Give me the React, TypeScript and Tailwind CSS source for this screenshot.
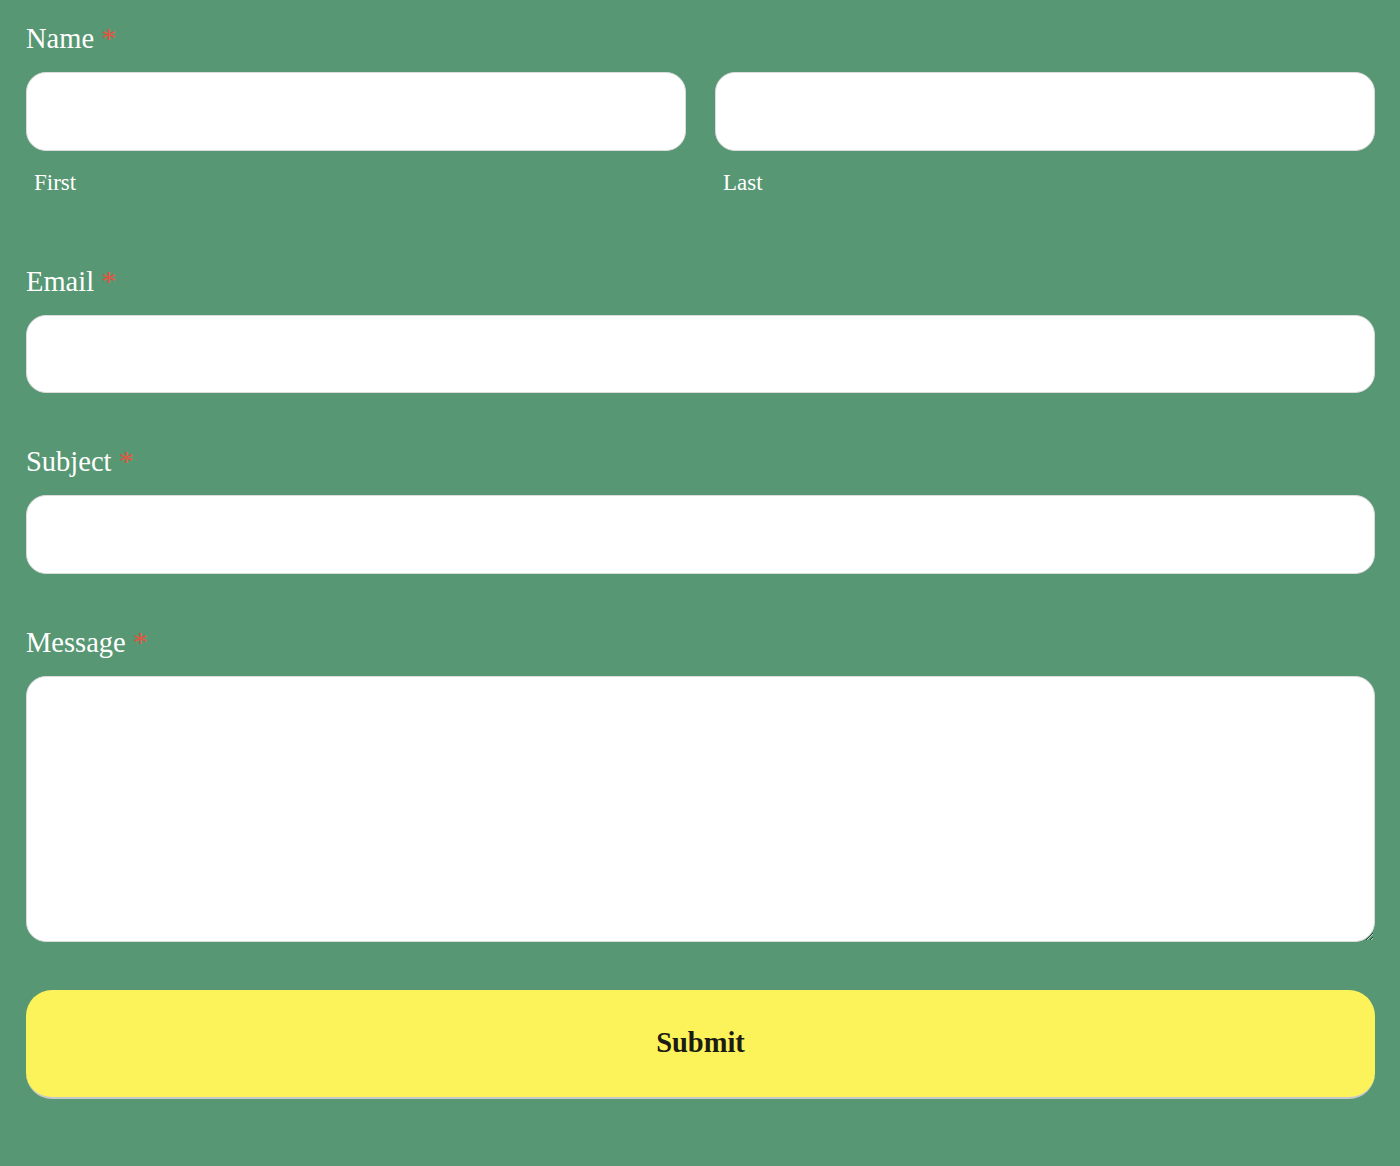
import React from "react";

const serif = { fontFamily: '"Liberation Serif", "Times New Roman", serif' };

function Label({ children, className = "" }: { children: React.ReactNode; className?: string }) {
  return (
    <label className={`block h-[34px] text-[28.5px] leading-[34px] text-white mb-[16px] ${className}`}>
      {children} <span className="text-[#e2553f] text-[30px] leading-none">*</span>
    </label>
  );
}

const inputCls =
  "block w-full h-[78.5px] bg-white rounded-[20px] border border-[#dcdcdc] outline-none px-4 text-[22px] text-black";

export default function App() {
  return (
    <div className="min-h-screen bg-[#579773] pl-[26px] pr-[25px] pt-[22px]" style={serif}>
      <form onSubmit={(e) => e.preventDefault()}>
        <div>
          <Label>Name</Label>
          <div className="grid grid-cols-2 gap-x-[29px]">
            <div>
              <input type="text" className={inputCls} />
              <div className="mt-[19px] pl-[8px] text-[23px] leading-[26px] text-white">First</div>
            </div>
            <div>
              <input type="text" className={inputCls} />
              <div className="mt-[19px] pl-[8px] text-[23px] leading-[26px] text-white">Last</div>
            </div>
          </div>
        </div>

        <div className="mt-[69px]">
          <Label>Email</Label>
          <input type="email" className={inputCls} />
        </div>

        <div className="mt-[52px]">
          <Label>Subject</Label>
          <input type="text" className={inputCls} />
        </div>

        <div className="mt-[52px]">
          <Label>Message</Label>
          <textarea className="block w-full h-[266px] bg-white rounded-[20px] border border-[#dcdcdc] outline-none p-4 text-[22px] text-black" />
        </div>

        <button
          type="submit"
          className="mt-[48.5px] w-full h-[109px] bg-[#fcf259] rounded-[26px] border-b-2 border-[#c4c8cc] flex items-center justify-center text-[28.5px] font-bold text-[#1c1c14]"
          style={serif}
        >
          Submit
        </button>
      </form>
    </div>
  );
}
